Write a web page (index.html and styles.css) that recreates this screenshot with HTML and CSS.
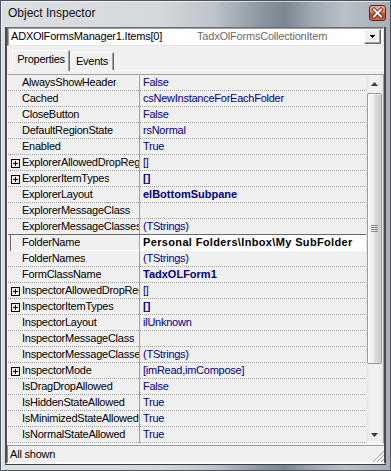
FILE: index.html
```html
<!DOCTYPE html>
<html>
<head>
<meta charset="utf-8">
<title>Object Inspector</title>
<link rel="stylesheet" href="styles.css">
</head>
<body>
<div class="window">
  <div class="titlebar">
    <span class="title">Object Inspector</span>
    <div class="close">
      <svg width="15" height="14" viewBox="0 0 15 14"><path d="M4 3.5l7 7M11 3.5l-7 7" stroke="#5a1a10" stroke-width="3.6" stroke-linecap="square"/><path d="M4 3.5l7 7M11 3.5l-7 7" stroke="#fff" stroke-width="2" stroke-linecap="square"/></svg>
    </div>
  </div>
  <div class="client">
    <div class="combo">
      <span class="combo-name">ADXOlFormsManager1.Items[0]</span>
      <span class="combo-type">TadxOlFormsCollectionItem</span>
      <div class="combo-btn"><svg width="5" height="3" viewBox="0 0 5 3"><path d="M0 0h5v1H0zM1 1h3v1H1zM2 2h1v1H2z" fill="#000"/></svg></div>
    </div>
    <div class="tabs">
      <div class="tab active">Properties</div>
      <div class="tab">Events</div>
    </div>
    <div class="tabgap"></div>
    <div class="grid">
      <div class="rows">
        <div class="row"><div class="name"><i class="exp"></i><span>AlwaysShowHeader</span></div><div class="val">False</div></div>
        <div class="row"><div class="name"><i class="exp"></i><span>Cached</span></div><div class="val">csNewInstanceForEachFolder</div></div>
        <div class="row"><div class="name"><i class="exp"></i><span>CloseButton</span></div><div class="val">False</div></div>
        <div class="row"><div class="name"><i class="exp"></i><span>DefaultRegionState</span></div><div class="val">rsNormal</div></div>
        <div class="row"><div class="name"><i class="exp"></i><span>Enabled</span></div><div class="val">True</div></div>
        <div class="row"><div class="name"><i class="exp"><svg width="9" height="9" viewBox="0 0 9 9"><rect x="0.5" y="0.5" width="8" height="8" fill="none" stroke="#000"/><path d="M2 4.5h5M4.5 2v5" stroke="#000"/></svg></i><span>ExplorerAllowedDropRegions</span></div><div class="val">[]</div></div>
        <div class="row"><div class="name"><i class="exp"><svg width="9" height="9" viewBox="0 0 9 9"><rect x="0.5" y="0.5" width="8" height="8" fill="none" stroke="#000"/><path d="M2 4.5h5M4.5 2v5" stroke="#000"/></svg></i><span>ExplorerItemTypes</span></div><div class="val bold">[]</div></div>
        <div class="row"><div class="name"><i class="exp"></i><span>ExplorerLayout</span></div><div class="val bold">elBottomSubpane</div></div>
        <div class="row"><div class="name"><i class="exp"></i><span>ExplorerMessageClass</span></div><div class="val"></div></div>
        <div class="row"><div class="name"><i class="exp"></i><span>ExplorerMessageClasses</span></div><div class="val">(TStrings)</div></div>
        <div class="row sel"><div class="name"><i class="exp"></i><span>FolderName</span></div><div class="val">Personal Folders\Inbox\My SubFolder</div></div>
        <div class="row"><div class="name"><i class="exp"></i><span>FolderNames</span></div><div class="val">(TStrings)</div></div>
        <div class="row"><div class="name"><i class="exp"></i><span>FormClassName</span></div><div class="val bold">TadxOLForm1</div></div>
        <div class="row"><div class="name"><i class="exp"><svg width="9" height="9" viewBox="0 0 9 9"><rect x="0.5" y="0.5" width="8" height="8" fill="none" stroke="#000"/><path d="M2 4.5h5M4.5 2v5" stroke="#000"/></svg></i><span>InspectorAllowedDropRegions</span></div><div class="val">[]</div></div>
        <div class="row"><div class="name"><i class="exp"><svg width="9" height="9" viewBox="0 0 9 9"><rect x="0.5" y="0.5" width="8" height="8" fill="none" stroke="#000"/><path d="M2 4.5h5M4.5 2v5" stroke="#000"/></svg></i><span>InspectorItemTypes</span></div><div class="val bold">[]</div></div>
        <div class="row"><div class="name"><i class="exp"></i><span>InspectorLayout</span></div><div class="val">ilUnknown</div></div>
        <div class="row"><div class="name"><i class="exp"></i><span>InspectorMessageClass</span></div><div class="val"></div></div>
        <div class="row"><div class="name"><i class="exp"></i><span>InspectorMessageClasses</span></div><div class="val">(TStrings)</div></div>
        <div class="row"><div class="name"><i class="exp"><svg width="9" height="9" viewBox="0 0 9 9"><rect x="0.5" y="0.5" width="8" height="8" fill="none" stroke="#000"/><path d="M2 4.5h5M4.5 2v5" stroke="#000"/></svg></i><span>InspectorMode</span></div><div class="val">[imRead,imCompose]</div></div>
        <div class="row"><div class="name"><i class="exp"></i><span>IsDragDropAllowed</span></div><div class="val">False</div></div>
        <div class="row"><div class="name"><i class="exp"></i><span>IsHiddenStateAllowed</span></div><div class="val">True</div></div>
        <div class="row"><div class="name"><i class="exp"></i><span>IsMinimizedStateAllowed</span></div><div class="val">True</div></div>
        <div class="row"><div class="name"><i class="exp"></i><span>IsNormalStateAllowed</span></div><div class="val">True</div></div>
      </div>
      <div class="sb">
        <div class="sb-btn"><svg width="7" height="4" viewBox="0 0 7 4"><path d="M0 4L3.5 0L7 4z" fill="#3c3c3c"/></svg></div>
        <div class="thumb">
          <svg width="7" height="7" viewBox="0 0 7 7"><path d="M0 0.5h7M0 2.5h7M0 4.5h7M0 6.5h7" stroke="#8a8a8a"/></svg>
        </div>
        <div class="sb-track"></div>
        <div class="sb-btn"><svg width="7" height="4" viewBox="0 0 7 4"><path d="M0 0L3.5 4L7 0z" fill="#3c3c3c"/></svg></div>
      </div>
    </div>
    <div class="status">
      <span class="status-text">All shown</span>
      <svg class="grip" width="12" height="12" viewBox="0 0 12 12"><path d="M12 1L1 12M12 5L5 12M12 9L9 12" stroke="#a0a0a0"/><path d="M12 2L2 12M12 6L6 12M12 10L10 12" stroke="#fff"/></svg>
    </div>
  </div>
</div>
</body>
</html>
```
FILE: styles.css
```css
html, body {
  margin: 0;
  padding: 0;
  background: #ffffff;
}

body {
  font-family: "Liberation Sans", Arial, sans-serif;
  font-size: 11px;
  color: #000;
}

.window {
  width: 391px;
  height: 471px;
  box-sizing: border-box;
  border: 1px solid #4d5660;
  padding: 0 4px 6px 4px;
  display: flex;
  flex-direction: column;
  background: linear-gradient(90deg, #dcdfe2 0%, #d5d9dd 40%, #bcc3c9 55%, #8995a0 67%, #7a8692 73%, #9ea8b1 80%, #b9c0c7 88%, #a6afb7 100%);
  box-shadow: inset 1px 1px 0 rgba(255,255,255,0.6);
}

.titlebar {
  height: 26px;
  flex: none;
  display: flex;
  align-items: flex-start;
  justify-content: space-between;
}

.title {
  margin: 4px 0 0 3px;
  font-size: 12px;
  line-height: 16px;
  color: #101010;
}

.close {
  width: 17px;
  height: 16px;
  box-sizing: border-box;
  margin: 4px 0 0 0;
  border: 1px solid #5e2416;
  border-radius: 3px;
  background: linear-gradient(180deg, #eab3a2 0%, #dc7f63 45%, #c8462a 55%, #d46a4b 100%);
  display: flex;
  align-items: center;
  justify-content: center;
}

.client {
  flex: none;
  height: 437px;
  box-sizing: border-box;
  border-left: 2px solid #4a4a4a;
  border-right: 2px solid #4a4a4a;
  border-bottom: 1px solid #ffffff;
  box-shadow: 0 1px 0 #3c3c3c;
  background: #f0f0f0;
  display: flex;
  flex-direction: column;
}

/* combo */
.combo {
  height: 19px;
  flex: none;
  box-sizing: border-box;
  border: 1px solid;
  border-color: #6e6e6e #e3e3e3 #e3e3e3 #6e6e6e;
  box-shadow: inset 1px 1px 0 #a0a0a0;
  background: #ffffff;
  display: flex;
  align-items: center;
  padding: 0 1px 0 3px;
}

.combo-name {
  flex: 0 0 186px;
  white-space: nowrap;
  overflow: hidden;
  line-height: 15px;
  letter-spacing: -0.2px;
}

.combo-type {
  flex: 1;
  white-space: nowrap;
  overflow: hidden;
  line-height: 15px;
  color: #6a6a6a;
  letter-spacing: -0.2px;
}

.combo-btn {
  width: 17px;
  height: 15px;
  box-sizing: border-box;
  margin-right: 1px;
  border: 1px solid;
  border-color: #ffffff #696969 #696969 #ffffff;
  box-shadow: inset -1px -1px 0 #a0a0a0;
  background: #f0f0f0;
  display: flex;
  align-items: center;
  justify-content: center;
}

/* tabs */
.tabs {
  height: 25px;
  flex: none;
  box-sizing: border-box;
  display: flex;
  align-items: flex-end;
  padding-left: 5px;
  border-bottom: 1px solid #ffffff;
}

.tab {
  height: 18px;
  width: 44px;
  box-sizing: border-box;
  border-top: 1px solid #ffffff;
  border-left: 1px solid #ffffff;
  border-right: 1px solid #696969;
  box-shadow: inset -1px 0 0 #a0a0a0;
  padding-top: 1px;
  line-height: 14px;
  text-align: center;
  letter-spacing: -0.25px;
  background: #f0f0f0;
}

.tab.active {
  height: 21px;
  width: 58px;
  margin-bottom: -1px;
  position: relative;
}

.tabgap {
  height: 3px;
  flex: none;
}

/* grid */
.grid {
  height: 370px;
  flex: none;
  box-sizing: border-box;
  border-top: 1px solid #a0a0a0;
  border-left: 1px solid #ffffff;
  border-right: 1px solid #a0a0a0;
  border-bottom: 1px solid #ffffff;
  display: flex;
}

.rows {
  width: 358px;
  flex: none;
  display: flex;
  flex-direction: column;
}

.row {
  height: 16px;
  flex: none;
  display: flex;
  background: linear-gradient(90deg, #a0a0a0 50%, transparent 50%) 0 100% / 2px 1px repeat-x;
}

.name {
  width: 132px;
  flex: none;
  box-sizing: border-box;
  border-right: 1px solid #a0a0a0;
  padding-left: 3px;
  display: flex;
  align-items: flex-start;
  overflow: hidden;
  white-space: nowrap;
}

.exp {
  display: block;
  width: 9px;
  height: 9px;
  flex: none;
  margin: 4px 2px 0 0;
}

.exp svg {
  display: block;
}

.name span {
  flex: 0 1 auto;
  min-width: 0;
  overflow: hidden;
  line-height: 15px;
  letter-spacing: -0.25px;
}

.val {
  flex: 1;
  height: 15px;
  line-height: 15px;
  padding-left: 3px;
  color: #000080;
  white-space: nowrap;
  overflow: hidden;
  letter-spacing: -0.25px;
}

.val.bold {
  font-weight: bold;
  letter-spacing: 0;
}

.row.sel {
  height: 17px;
  margin-top: -1px;
  box-sizing: border-box;
  border-top: 1px solid #696969;
  background: linear-gradient(#ffffff, #ffffff) 0 100% / 100% 1px no-repeat;
}

.row.sel .name {
  box-shadow: inset 2px 0 0 #f0f0f0, inset 3px 0 0 #696969;
}

.row.sel .val {
  background: #ffffff;
  color: #000;
  font-weight: bold;
  letter-spacing: 0.35px;
}

/* scrollbar */
.sb {
  width: 17px;
  flex: none;
  display: flex;
  flex-direction: column;
  background: linear-gradient(90deg, #e6e6e6 0%, #f1f1f1 25%, #f1f1f1 75%, #e6e6e6 100%);
}

.sb-btn {
  height: 17px;
  flex: none;
  display: flex;
  align-items: center;
  justify-content: center;
}

.thumb {
  height: 271px;
  flex: none;
  margin: 1px 1px 0 1px;
  box-sizing: border-box;
  border: 1px solid #9b9b9b;
  border-radius: 2px;
  background: linear-gradient(90deg, #f7f7f7 0%, #ececec 45%, #dadada 55%, #cdcdcd 100%);
  box-shadow: inset 1px 1px 0 #ffffff;
  display: flex;
  align-items: center;
  justify-content: center;
}

.sb-track {
  flex: 1;
}

/* status */
.status {
  height: 18px;
  flex: none;
  margin-top: 1px;
  box-sizing: border-box;
  border-top: 1px solid #a0a0a0;
  border-bottom: 1px solid #ffffff;
  border-left: 1px solid #8a8a8a;
  padding-left: 2px;
  display: flex;
  align-items: flex-end;
}

.status-text {
  align-self: center;
  line-height: 16px;
  letter-spacing: -0.2px;
}

.grip {
  margin-left: auto;
  display: block;
}
```
